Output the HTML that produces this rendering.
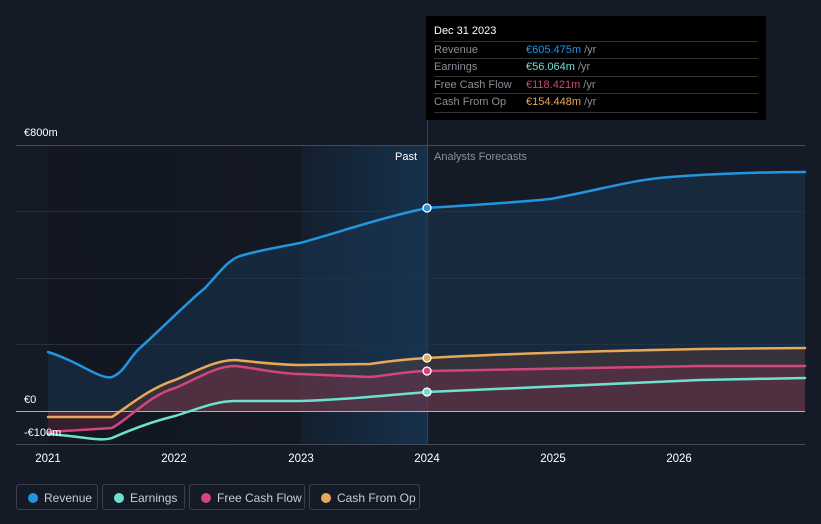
<!DOCTYPE html>
<html><head><style>
body{margin:0;width:821px;height:524px;background:#151b26;font-family:"Liberation Sans",sans-serif;overflow:hidden;position:relative}
.tt{position:absolute;left:426px;top:16px;width:340px;height:104px;background:#000;}
.tt .h{color:#fff;font-size:11px;position:absolute;left:8px;top:9px}
.row{position:absolute;left:8px;width:324px;border-top:1px solid #333;height:17px;font-size:11px;line-height:17px;color:#8a8f98}
.row span{position:absolute;left:92px}
.lg{position:absolute;top:484px;height:26px;border:1px solid #3a404b;border-radius:3px;color:#c8ccd2;font-size:12px;line-height:26px;box-sizing:border-box;padding-left:27px}
.lg i{position:absolute;left:11px;top:8px;width:10px;height:10px;border-radius:50%}
</style></head><body>
<svg width="821" height="524" style="position:absolute;left:0;top:0">
<defs>
<linearGradient id="past" x1="0" x2="1"><stop offset="0" stop-color="#121721"/><stop offset="1" stop-color="#131923"/></linearGradient>
<linearGradient id="hl" x1="0" x2="1"><stop offset="0" stop-color="#141f2e"/><stop offset="1" stop-color="#16314b"/></linearGradient>
</defs>
<rect x="48" y="145" width="253" height="300" fill="url(#past)"/>
<rect x="301" y="145" width="126" height="300" fill="url(#hl)"/>
<g stroke="#2a303b" stroke-width="1">
<line x1="16" y1="211.5" x2="805" y2="211.5"/><line x1="16" y1="278.5" x2="805" y2="278.5"/><line x1="16" y1="344.5" x2="805" y2="344.5"/>
</g>
<line x1="16" y1="145.5" x2="805" y2="145.5" stroke="#444a55"/>
<line x1="16" y1="444.5" x2="805" y2="444.5" stroke="#444a55"/>
<line x1="427.5" y1="120" x2="427.5" y2="445" stroke="#2a4660"/>
<path d="M48,352 C80,362 100,380 112,377 C125,372 130,356 140,348 C160,330 190,300 205,288 C220,272 228,260 240,256 C260,250 280,247 300,243 C340,232 380,218 427,208 C470,205 510,203 550,199 C600,190 630,180 670,177 C720,173 780,172 805,172 L805,411 L48,411Z" fill="#1a3550" fill-opacity="0.55"/>
<path d="M48,417 L112,417 C130,405 150,388 175,380 C195,372 215,360 235,360 C255,362 280,365 300,365 L370,364 C390,361 410,359 427,358 C500,354 600,351 700,349 L805,348 L805,411 L48,411Z" fill="#7a4a3a" fill-opacity="0.3"/>
<path d="M48,432 L112,428 C130,418 150,395 175,388 C195,380 215,366 235,366 C255,368 280,374 300,374 L370,377 C390,375 410,371 427,371 C500,369 600,368 700,366 L805,366 L805,411 L48,411Z" fill="#8a3050" fill-opacity="0.3"/>
<line x1="16" y1="411.5" x2="805" y2="411.5" stroke="#aeb2b8"/>
<g fill="none" stroke-width="2.5" stroke-linecap="round">
<path d="M48,352 C80,362 100,380 112,377 C125,372 130,356 140,348 C160,330 190,300 205,288 C220,272 228,260 240,256 C260,250 280,247 300,243 C340,232 380,218 427,208 C470,205 510,203 550,199 C600,190 630,180 670,177 C720,173 780,172 805,172" stroke="#2394df"/>
<path d="M48,417 L112,417 C130,405 150,388 175,380 C195,372 215,360 235,360 C255,362 280,365 300,365 L370,364 C390,361 410,359 427,358 C500,354 600,351 700,349 L805,348" stroke="#e8a85a"/>
<path d="M48,432 L112,428 C130,418 150,395 175,388 C195,380 215,366 235,366 C255,368 280,374 300,374 L370,377 C390,375 410,371 427,371 C500,369 600,368 700,366 L805,366" stroke="#d2457f"/>
<path d="M48,434 C80,436 100,442 112,438 C130,430 150,422 175,416 C195,410 215,401 235,401 L300,401 C340,400 380,396 427,392 C500,388 600,384 700,380 L805,378" stroke="#6fe0cf"/>
</g>
<g stroke="#fff" stroke-width="1.3">
<circle cx="427" cy="208" r="4" fill="#2394df"/>
<circle cx="427" cy="358" r="4" fill="#e8a85a"/>
<circle cx="427" cy="371" r="4" fill="#d2457f"/>
<circle cx="427" cy="392" r="4" fill="#6fe0cf"/>
</g>
<g font-size="11" fill="#fff">
<text x="24" y="136">€800m</text>
<text x="24" y="403">€0</text>
<text x="24" y="436">-€100m</text>
<text x="395" y="160">Past</text>
<text x="434" y="160" fill="#8a8f98">Analysts Forecasts</text>
<g text-anchor="middle" font-size="11.5"><text x="48" y="462">2021</text><text x="174" y="462">2022</text><text x="301" y="462">2023</text><text x="427" y="462">2024</text><text x="553" y="462">2025</text><text x="679" y="462">2026</text></g>
</g>
</svg>
<div class="tt"><div class="h">Dec 31 2023</div>
<div class="row" style="top:25px">Revenue<span style="color:#2394df">€605.475m <b style="font-weight:normal;color:#8a8f98">/yr</b></span></div>
<div class="row" style="top:42px">Earnings<span style="color:#6fe0cf">€56.064m <b style="font-weight:normal;color:#8a8f98">/yr</b></span></div>
<div class="row" style="top:60px">Free Cash Flow<span style="color:#d2457f">€118.421m <b style="font-weight:normal;color:#8a8f98">/yr</b></span></div>
<div class="row" style="top:77px">Cash From Op<span style="color:#e8a85a">€154.448m <b style="font-weight:normal;color:#8a8f98">/yr</b></span></div>
<div class="row" style="top:96px;height:0"></div>
</div>
<div class="lg" style="left:16px;width:82px"><i style="background:#2394df"></i>Revenue</div>
<div class="lg" style="left:102px;width:83px"><i style="background:#6fe0cf"></i>Earnings</div>
<div class="lg" style="left:189px;width:116px"><i style="background:#d2457f"></i>Free Cash Flow</div>
<div class="lg" style="left:309px;width:111px"><i style="background:#e8a85a"></i>Cash From Op</div>
</body></html>
